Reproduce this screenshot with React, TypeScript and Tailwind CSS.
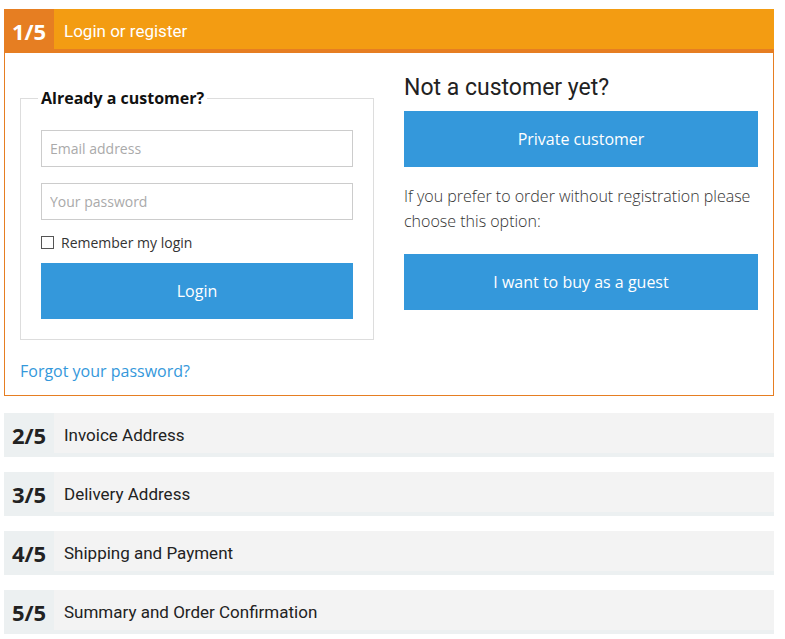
import React from "react";

const steps = [
  { num: "2/5", title: "Invoice Address" },
  { num: "3/5", title: "Delivery Address" },
  { num: "4/5", title: "Shipping and Payment" },
  { num: "5/5", title: "Summary and Order Confirmation" },
];

const openSans = "font-['Open_Sans',sans-serif]";
const roboto = "font-['Roboto',sans-serif]";

function StepRow({ num, title }: { num: string; title: string }) {
  return (
    <div className="flex h-[44px] bg-[#f3f3f3] border-b-4 border-[#ecf0f1]">
      <div
        className={`w-[50px] flex items-center justify-center pt-1 bg-[#ecf0f1] text-[22px] font-bold text-[#222] ${openSans}`}
      >
        {num}
      </div>
      <div className={`flex items-center pl-[10px] pt-[5px] text-[17px] text-[#222] ${roboto}`}>{title}</div>
    </div>
  );
}

export default function App() {
  return (
    <div className="bg-white min-h-screen pt-[9px] pl-[4px]">
      <div className="w-[770px]">
        {/* Active step */}
        <div className="flex h-[44px] bg-[#f39c12] border-b-4 border-[#e67e22]">
          <div
            className={`w-[50px] flex items-center justify-center pt-1 bg-[#e67e22] text-[22px] font-bold text-white ${openSans}`}
          >
            1/5
          </div>
          <div className={`flex items-center pl-[10px] pt-[5px] text-[17px] text-white ${roboto}`}>
            Login or register
          </div>
        </div>

        <div className="border-x border-b border-[#e67e22] px-[15px] pt-[23px] pb-[12px]">
          <div className="grid grid-cols-2 gap-[30px] items-start">
            {/* Existing customer */}
            <div className="mt-[10px]">
              <fieldset className="border border-[#ddd] px-[20px] pb-[20px] pt-5 min-w-0">
                <legend
                  className={`-ml-[3px] px-[3px] text-[16px] leading-[24px] font-bold text-[#111] ${openSans}`}
                >
                  Already a customer?
                </legend>
                <input
                  type="text"
                  placeholder="Email address"
                  className={`block w-full h-[37px] border border-[#ccc] px-2 text-[14px] text-[#333] placeholder-[#aaa] outline-none ${openSans}`}
                />
                <input
                  type="password"
                  placeholder="Your password"
                  className={`block w-full h-[37px] mt-4 border border-[#ccc] px-2 text-[14px] text-[#333] placeholder-[#aaa] outline-none ${openSans}`}
                />
                <label className={`flex items-center gap-[7px] h-5 mt-3 text-[14px] text-[#333] ${openSans}`}>
                  <input
                    type="checkbox"
                    className="appearance-none w-[13px] h-[13px] border border-[#555] bg-white"
                  />
                  Remember my login
                </label>
                <button
                  className={`block w-full h-[56px] mt-[11px] bg-[#3498db] text-white text-[16px] ${openSans}`}
                >
                  Login
                </button>
              </fieldset>
              <a href="#" className={`block mt-[19px] text-[16px] leading-[24px] text-[#3498db] ${openSans}`}>
                Forgot your password?
              </a>
            </div>

            {/* New customer */}
            <div>
              <h2 className={`text-[23px] leading-[24px] text-[#222] ${roboto}`}>Not a customer yet?</h2>
              <button
                className={`block w-full h-[56px] mt-[11px] bg-[#3498db] text-white text-[16px] ${openSans}`}
              >
                Private customer
              </button>
              <p className={`mt-[17px] text-[16px] leading-[25px] font-light text-[#333] ${openSans}`}>
                If you prefer to order without registration please choose this option:
              </p>
              <button
                className={`block w-full h-[56px] mt-[20px] bg-[#3498db] text-white text-[16px] ${openSans}`}
              >
                I want to buy as a guest
              </button>
            </div>
          </div>
        </div>

        <div className="flex flex-col gap-[15px] mt-[17px]">
          {steps.map((s) => (
            <StepRow key={s.num} num={s.num} title={s.title} />
          ))}
        </div>
      </div>
    </div>
  );
}
